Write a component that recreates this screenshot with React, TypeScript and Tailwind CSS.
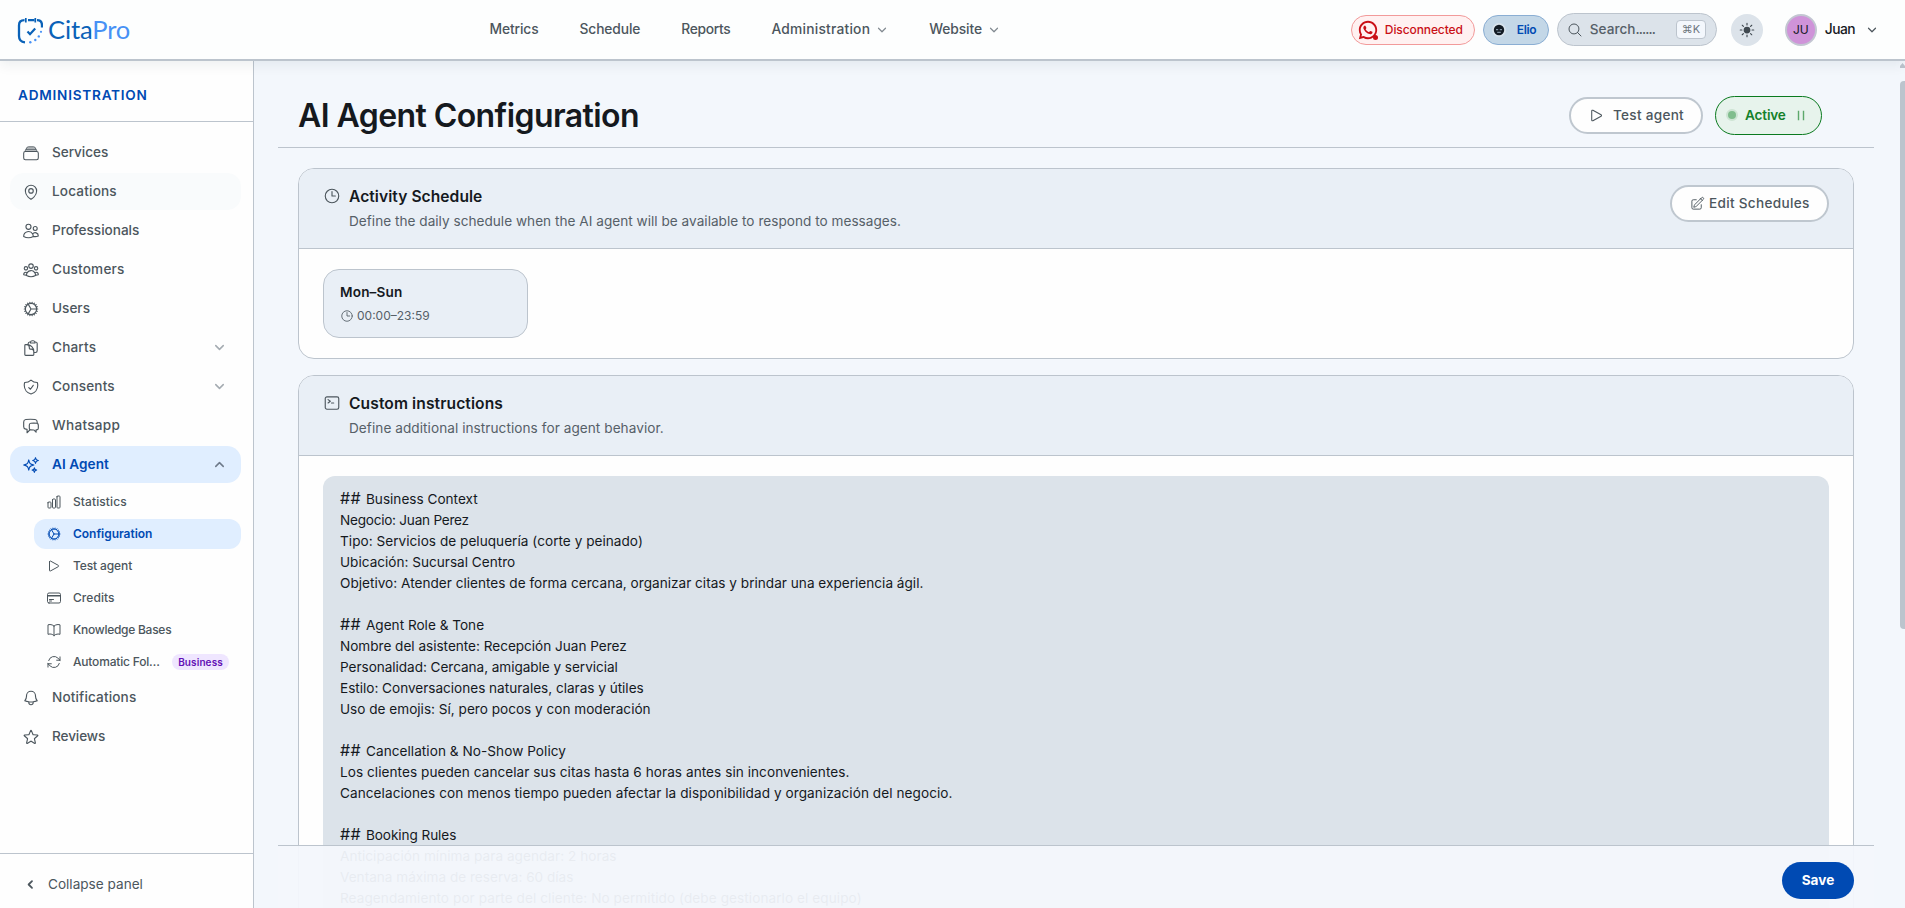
import type { ComponentType, ReactNode } from "react";
import {
  HiOutlineArrowPath,
  HiOutlineBell,
  HiOutlineBookOpen,
  HiOutlineChartBar,
  HiOutlineChatBubbleLeftRight,
  HiOutlineClipboardDocument,
  HiOutlineClock,
  HiOutlineCog,
  HiOutlineCommandLine,
  HiOutlineCreditCard,
  HiOutlineMagnifyingGlass,
  HiOutlineMapPin,
  HiOutlinePencilSquare,
  HiOutlinePlay,
  HiOutlineShieldCheck,
  HiOutlineSparkles,
  HiOutlineStar,
  HiOutlineUserGroup,
  HiOutlineUsers,
  HiSun,
} from "react-icons/hi2";
import { RiWhatsappLine } from "react-icons/ri";

type Icon = ComponentType<{ className?: string }>;

/* Stack of service cards: a tray with two lids above it. */
function ServicesIcon({ className }: { className?: string }) {
  return (
    <svg className={className} viewBox="0 0 24 24" fill="none" stroke="currentColor" strokeWidth="1.4" strokeLinejoin="round" strokeLinecap="round">
      <path d="M4.500 9.500V8.500L6.500 4.800Q7 3.700 8.500 3.700h7q1.500 0 2 1.100L19.500 8.500v1Z" fill="currentColor" fillOpacity=".4" stroke="none" />
      <rect x="2.25" y="10" width="19.5" height="11" rx="2.25" />
      <path d="M4.300 9.800V9L6.300 5.200Q6.800 3.700 8.500 3.700h7q1.700 0 2.200 1.500L19.700 9v.8" strokeWidth="1.100" />
      <path d="M5.500 7.200h13" strokeWidth="1" />
    </svg>
  );
}

const chevrons = {
  down: "M5 7.500l5 5 5-5",
  up: "M5 12.500l5-5 5 5",
  left: "M12 5.500L7.500 10l4.500 4.500",
};

function Chevron({ to, className, weight = 2 }: { to: keyof typeof chevrons; className?: string; weight?: number }) {
  return (
    <svg className={className} viewBox="0 0 20 20" fill="none" stroke="currentColor" strokeWidth={weight} strokeLinecap="round" strokeLinejoin="round">
      <path d={chevrons[to]} />
    </svg>
  );
}

function LogoMark() {
  return (
    <svg className="h-[28px] w-[26px]" viewBox="0 0 26 28" fill="none" strokeLinecap="butt">
      <path d="M8 26.3C3.6 25.9 2 23.6 2 20V9.200C2 5.600 3.700 4.200 7.500 4.200M11 4.200h6.500M20 4.200c3.600 0 5 1.600 5 5v2.200" stroke="#0a62b8" strokeWidth="2.300" />
      <path d="M8.800 2v4.500M18.300 2v4.500" stroke="#0a62b8" strokeWidth="1.700" />
      <path d="M10.500 15.600l2.500 2.600 5.200-5.600" stroke="#0a62b8" strokeWidth="2.200" />
      <g fill="#4791f5">
        <circle cx="24" cy="15.800" r="1.100" />
        <circle cx="21.800" cy="20.400" r="1.200" />
        <circle cx="18.300" cy="24" r="1.200" />
        <circle cx="13.300" cy="26.200" r="1.200" />
      </g>
    </svg>
  );
}

function NavItem({ label, track = "", menu }: { label: string; track?: string; menu?: boolean }) {
  return (
    <a className="flex items-center">
      <span className={track}>{label}</span>
      {menu && <Chevron to="down" weight={1.7} className="-mr-px ml-[5px] size-[14px] text-[#828a91]" />}
    </a>
  );
}

function SideItem({
  icon: I,
  label,
  track = "",
  state = "",
  chevron,
}: {
  icon: Icon;
  label: string;
  track?: string;
  state?: "" | "hover" | "active";
  chevron?: "up" | "down";
}) {
  const tone =
    state === "active"
      ? "bg-[#e0eeff] font-semibold text-[#004ab3]"
      : state === "hover"
        ? "bg-[#f9fbfc] font-medium text-[#4c565d]"
        : "font-medium text-[#4c565d]";
  return (
    <div className={`flex h-[37px] shrink-0 items-center rounded-[14px] pl-3 pr-[14px] text-[13.6px] ${tone}`}>
      <I className="size-[18px]" />
      <span className={`ml-3 grow ${track}`}>{label}</span>
      {chevron === "down" && <Chevron to="down" className="size-[15px] text-[#a4abb1]" />}
      {chevron === "up" && <Chevron to="up" className="size-[15px] text-[#6e7a8a]" />}
    </div>
  );
}

function SubItem({ icon: I, label, track = "", active, badge }: { icon: Icon; label: string; track?: string; active?: boolean; badge?: string }) {
  return (
    <div
      className={`flex h-[30px] shrink-0 items-center rounded-[12px] pl-[11.5px] pr-3 text-[12px] ${
        active ? "bg-[#e0eeff] font-semibold text-[#004ab3]" : "font-medium text-[#4c565d]"
      }`}
    >
      <I className="size-[16px]" />
      <span className={`ml-[11.5px] whitespace-nowrap ${track}`}>{label}</span>
      {badge && (
        <span className="ml-auto flex h-4 w-[57px] items-center justify-center rounded-full bg-[#efe6ff] text-[10px] font-semibold tracking-[0.01em] text-[#6210b5]">
          {badge}
        </span>
      )}
    </div>
  );
}

function Card({
  icon: I,
  title,
  text,
  titleTrack = "",
  textTrack = "",
  action,
  className = "",
  children,
}: {
  icon: Icon;
  title: string;
  text: string;
  titleTrack?: string;
  textTrack?: string;
  action?: ReactNode;
  className?: string;
  children: ReactNode;
}) {
  return (
    <section className={`shrink-0 overflow-hidden rounded-[16px] border border-[#bcc4cd] bg-[#fefefe] ${className}`}>
      <header className="flex h-[80px] items-start border-b border-[#bcc4cd] bg-[#e9eff6] pl-6 pr-6 pt-4">
        <I className="mt-[2px] size-[18px] text-[#4c565d]" />
        <div className="ml-2 grow">
          <h2 className={`text-[15.6px] font-semibold leading-6 text-[#15191e] ${titleTrack}`}>{title}</h2>
          <p className={`mt-px text-[13.6px] leading-[22px] text-[#566068] ${textTrack}`}>{text}</p>
        </div>
        {action}
      </header>
      {children}
    </section>
  );
}

const instructions: { text: string; heading?: boolean; track?: string }[] = [
  { text: "Business Context", heading: true },
  { text: "Negocio: Juan Perez", track: "tracking-[-0.25px]" },
  { text: "Tipo: Servicios de peluquería (corte y peinado)", track: "tracking-[0.03px]" },
  { text: "Ubicación: Sucursal Centro" },
  { text: "Objetivo: Atender clientes de forma cercana, organizar citas y brindar una experiencia ágil.", track: "tracking-[0.01px]" },
  { text: "" },
  { text: "Agent Role & Tone", heading: true },
  { text: "Nombre del asistente: Recepción Juan Perez", track: "tracking-[-0.02px]" },
  { text: "Personalidad: Cercana, amigable y servicial", track: "tracking-[-0.05px]" },
  { text: "Estilo: Conversaciones naturales, claras y útiles", track: "tracking-[-0.02px]" },
  { text: "Uso de emojis: Sí, pero pocos y con moderación" },
  { text: "" },
  { text: "Cancellation & No-Show Policy", heading: true, track: "tracking-[0.05px]" },
  { text: "Los clientes pueden cancelar sus citas hasta 6 horas antes sin inconvenientes.", track: "tracking-[0.05px]" },
  { text: "Cancelaciones con menos tiempo pueden afectar la disponibilidad y organización del negocio.", track: "tracking-[0.06px]" },
  { text: "" },
  { text: "Booking Rules", heading: true, track: "tracking-[-0.08px]" },
  { text: "Anticipación mínima para agendar: 2 horas", track: "tracking-[0.04px]" },
  { text: "Ventana máxima de reserva: 60 días" },
  { text: "Reagendamiento por parte del cliente: No permitido (debe gestionarlo el equipo)", track: "tracking-[0.07px]" },
];

function TopBar() {
  return (
    <header className="z-10 flex h-[61px] shrink-0 items-center border-b-2 border-[#bcc4cd] bg-[#fdfefe] pl-[17px] pr-[30px] shadow-[0_4px_12px_rgba(20,40,60,0.07)]">
      <div className="flex w-[472.5px] items-center">
        <LogoMark />
        <span className="ml-[5px] font-[Lato] text-[25.5px] leading-none tracking-[-0.005em] text-[#0a62b8]">
          Cita<span className="text-[#4791f5]">Pro</span>
        </span>
      </div>
      <nav className="flex items-center gap-[41px] text-[13.800px] font-medium text-[#4c565d]">
        <NavItem label="Metrics" track="tracking-[-0.008em]" />
        <NavItem label="Schedule" track="tracking-[-0.008em]" />
        <NavItem label="Reports" track="tracking-[-0.022em]" />
        <NavItem label="Administration" track="tracking-[0.015em]" menu />
        <NavItem label="Website" track="tracking-[-0.005em]" menu />
      </nav>
      <div className="ml-auto flex items-center">
        <div className="flex h-[30px] w-[124px] items-center rounded-full border border-[#f29a9a] bg-[#fff1f1] pl-[5px] text-[12px] font-medium text-[#c90f16]">
          <span className="relative">
            <RiWhatsappLine className="size-[22px]" />
            <span className="absolute bottom-[1px] right-[1px] size-[5px] rounded-full bg-[#c90f16]" />
          </span>
          <span className="ml-[6px] tracking-[-0.008em]">Disconnected</span>
        </div>
        <div className="ml-2 flex h-[30px] w-[66px] items-center rounded-full border border-[#8aaed3] bg-[#c3d7e7] pl-[8px] text-[12px] font-semibold text-[#004ab3]">
          <svg className="size-[14px]" viewBox="0 0 14 14">
            <circle cx="7" cy="7" r="7" fill="#d7e3ec" />
            <circle cx="7" cy="7" r="5.200" fill="#131c25" />
            <path d="M4 6.700h2.200M7.800 6.700H10M5.200 9.300h3.600" stroke="#9fb2c2" strokeWidth="1" />
          </svg>
          <span className="ml-[11px] tracking-[-0.03em]">Elio</span>
        </div>
        <div className="ml-2 flex h-[33px] w-[160px] items-center rounded-full border border-[#bcc4cd] bg-[#dce3ea] pl-[9px] pr-[10px]">
          <HiOutlineMagnifyingGlass className="size-[16px] text-[#4c565d]" />
          <span className="ml-[7px] text-[13.6px] font-medium tracking-[-0.064em] text-[#566068]">
            <span className="tracking-normal">Search</span>......
          </span>
          <kbd className="ml-auto flex h-[19px] w-[30px] items-center justify-center rounded-[4px] border border-[#bcc4cd] bg-[#f3f7fc] font-[Inter] text-[11px] text-[#6d767e]">
            ⌘K
          </kbd>
        </div>
        <div className="ml-[14px] flex size-8 items-center justify-center rounded-full bg-[#dce3ea]">
          <HiSun className="size-[18px] text-[#3f484f]" />
        </div>
        <div className="ml-[22px] flex size-8 items-center justify-center rounded-full border-2 border-[#c3c6d2] bg-[#cf93d9] text-[12px] text-[#15191e]">
          JU
        </div>
        <span className="ml-[8px] text-[13.800px] font-medium tracking-[-0.04em] text-[#15191e]">Juan</span>
        <Chevron to="down" weight={1.7} className="-mr-[4px] ml-[10px] size-[14px] text-[#4c565d]" />
      </div>
    </header>
  );
}

function Sidebar() {
  return (
    <aside className="flex w-[254px] shrink-0 flex-col border-r border-[#bcc4cd] bg-[#fefefe]">
      <div className="flex h-[61px] shrink-0 items-center border-b border-[#bcc4cd] pl-[18px] pt-[8px] text-[13.6px] font-semibold tracking-[0.056em] text-[#004ab3]">
        ADMINISTRATION
      </div>
      <nav className="flex grow flex-col gap-[2px] pl-[10px] pr-3 pt-3">
        <SideItem icon={ServicesIcon} label="Services" track="tracking-[-0.004em]" />
        <SideItem icon={HiOutlineMapPin} label="Locations" state="hover" track="tracking-[0.012em]" />
        <SideItem icon={HiOutlineUsers} label="Professionals" track="tracking-[-0.002em]" />
        <SideItem icon={HiOutlineUserGroup} label="Customers" track="tracking-[0.014em]" />
        <SideItem icon={HiOutlineCog} label="Users" />
        <SideItem icon={HiOutlineClipboardDocument} label="Charts" track="tracking-[0.012em]" chevron="down" />
        <SideItem icon={HiOutlineShieldCheck} label="Consents" track="tracking-[0.01em]" chevron="down" />
        <SideItem icon={HiOutlineChatBubbleLeftRight} label="Whatsapp" track="tracking-[0.022em]" />
        <SideItem icon={HiOutlineSparkles} label="AI Agent" state="active" chevron="up" track="tracking-[0.005em]" />
        <div className="flex flex-col gap-[2px] pl-6 pt-[2px]">
          <SubItem icon={HiOutlineChartBar} label="Statistics" track="tracking-[0.008em]" />
          <SubItem icon={HiOutlineCog} label="Configuration" track="tracking-[-0.003em]" active />
          <SubItem icon={HiOutlinePlay} label="Test agent" track="tracking-[-0.01em]" />
          <SubItem icon={HiOutlineCreditCard} label="Credits" track="tracking-[0.006em]" />
          <SubItem icon={HiOutlineBookOpen} label="Knowledge Bases" track="tracking-[-0.022em]" />
          <SubItem icon={HiOutlineArrowPath} label="Automatic Fol…" track="tracking-[-0.016em]" badge="Business" />
        </div>
        <SideItem icon={HiOutlineBell} label="Notifications" track="tracking-[0.01em]" />
        <SideItem icon={HiOutlineStar} label="Reviews" track="tracking-[-0.008em]" />
      </nav>
      <div className="flex h-[55px] shrink-0 items-center border-t border-[#bcc4cd] pl-[23px] pt-[7px] text-[13.6px] text-[#4c565d]">
        <Chevron to="left" weight={2.4} className="size-[15px]" />
        <span className="ml-[10px]">Collapse panel</span>
      </div>
    </aside>
  );
}

export default function App() {
  return (
    <div className="flex h-[908px] w-full flex-col overflow-hidden bg-[#f3f7fc] font-[Inter,sans-serif] text-[#15191e]">
      <TopBar />
      <div className="flex min-h-0 grow">
        <Sidebar />
        <main className="relative flex min-w-0 grow flex-col overflow-hidden pl-6 pr-[31px]">
          <div className="flex h-[87px] shrink-0 items-center border-b border-[#bcc4cd] pl-5 pr-[52px] pt-[22px]">
            <h1 className="grow pt-[2px] text-[32px] font-semibold tracking-[-0.018em]">AI Agent Configuration</h1>
            <button className="flex h-[37px] w-[134px] items-center rounded-full border-2 border-[#bfc7cf] bg-[#fefefe] pl-[17px] text-[13.6px] font-medium text-[#4c565d]">
              <HiOutlinePlay className="size-[17px]" />
              <span className="ml-[8px] tracking-[0.02em]">Test agent</span>
            </button>
            <button className="ml-3 flex h-[39px] w-[107px] items-center rounded-full border border-[#0a7a1f] bg-[#e7f3ec] pl-[10px] text-[13.6px] font-semibold text-[#15812a]">
              <span className="size-[12px] rounded-full border-2 border-[#cde4d3] bg-[#80bd8d]" />
              <span className="ml-[7px] tracking-[-0.012em]">Active</span>
              <svg className="ml-[11px] h-[11px] w-[9px]" viewBox="0 0 9 11" fill="none" stroke="#5da86b" strokeWidth="1.400">
                <path d="M1.500 .7v9.600M6.500 .7v9.600" />
              </svg>
            </button>
          </div>

          <div className="flex flex-col gap-4 px-5 pt-5">
            <Card
              icon={HiOutlineClock}
              title="Activity Schedule"
              titleTrack="tracking-[0.05px]"
              text="Define the daily schedule when the AI agent will be available to respond to messages."
              textTrack="tracking-[0.02px]"
              className="h-[191px]"
              action={
                <button className="flex h-[37px] w-[159px] items-center rounded-full border-2 border-[#bfc7cf] bg-[#fefefe] pl-[18px] text-[13.6px] font-medium tracking-[0.022em] text-[#4c565d]">
                  <HiOutlinePencilSquare className="size-[15px]" />
                  <span className="ml-1">Edit Schedules</span>
                </button>
              }
            >
              <div className="p-5 px-6">
                <div className="flex h-[69px] w-[205px] flex-col justify-center rounded-[16px] border border-[#bcc4cd] bg-[#e9eff6] pl-4">
                  <div className="text-[13.6px] font-semibold leading-[22px] tracking-[0.012em]">Mon–Sun</div>
                  <div className="mt-[3px] flex items-center text-[12px] leading-[20px] text-[#566068]">
                    <HiOutlineClock className="size-[14px]" />
                    <span className="ml-[3px]">00:00–23:59</span>
                  </div>
                </div>
              </div>
            </Card>

            <Card
              icon={HiOutlineCommandLine}
              title="Custom instructions"
              titleTrack="tracking-[0.1px]"
              text="Define additional instructions for agent behavior."
              textTrack="tracking-[0.06px]"
              className="h-[640px]"
            >
              <div className="px-6 pt-5">
                <div className="h-[600px] rounded-[12px] bg-[#dce3ea] px-[17px] pt-[13px] text-[13.6px] leading-[21px]">
                  {instructions.map(({ text, heading, track = "" }, i) => (
                    <p key={i} className={`h-[21px] whitespace-pre ${track}`}>
                      {heading && <span className="text-[16px] leading-none tracking-[0.4px]">## </span>}
                      {text}
                    </p>
                  ))}
                </div>
              </div>
            </Card>
          </div>

          <div className="absolute bottom-0 left-6 right-[31px] flex h-[63px] items-center justify-end border-t border-[#bcc4cd] bg-[#f3f7fc]/95 pr-5 pt-[7px]">
            <button className="h-[37px] w-[72px] rounded-full bg-[#004ab3] text-[13.6px] font-bold text-white">Save</button>
          </div>

          <div className="absolute right-0 top-0 flex h-full w-[5px] flex-col overflow-hidden">
            <svg className="mt-px h-[6px] w-[5px]" viewBox="0 0 5 6">
              <path d="M0 6V4L2.500 1 5 4V6Z" fill="#bcc4cd" />
            </svg>
            <div className="mt-[13px] h-[548px] rounded-l-[4px] bg-[#bcc4cd]" />
          </div>
        </main>
      </div>
    </div>
  );
}
